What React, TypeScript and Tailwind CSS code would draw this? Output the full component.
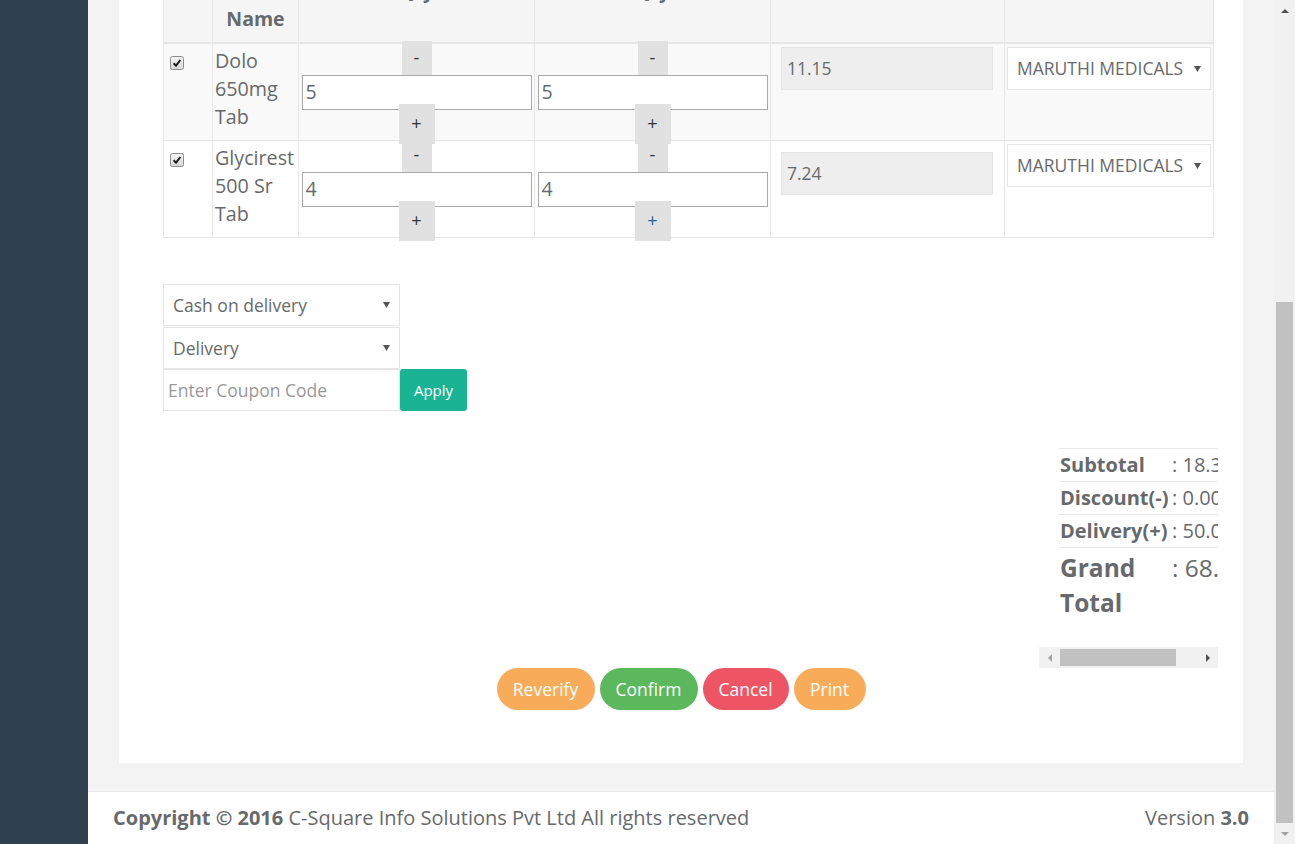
import React from "react";

interface IRow {
  name: string;
  qty: string;
  price: string;
  priceTop: string;
  bg: string;
  plusColor: string;
}

const rows: IRow[] = [
  { name: "Dolo 650mg Tab", qty: "5", price: "11.15", priceTop: "mt-[3px]", bg: "bg-[#f9f9f9]", plusColor: "text-[#333]" },
  { name: "Glycirest 500 Sr Tab", qty: "4", price: "7.24", priceTop: "mt-[11px]", bg: "bg-white", plusColor: "text-[#2a6496]" },
];

const summary = [
  ["Subtotal", ": 18.39"],
  ["Discount(-)", ": 0.00"],
  ["Delivery(+)", ": 50.00"],
];

const Caret = () => (
  <svg width="7" height="6" viewBox="0 0 7 6" className="shrink-0">
    <path d="M0 0h7L3.5 6z" fill="#555" />
  </svg>
);

const CheckBox = () => (
  <svg width="14" height="14" viewBox="0 0 14 14">
    <defs>
      <linearGradient id="cbg" x1="0" y1="0" x2="0" y2="1">
        <stop offset="0" stopColor="#f6f6f6" />
        <stop offset="1" stopColor="#d6d6d6" />
      </linearGradient>
    </defs>
    <rect x="0.5" y="0.5" width="13" height="13" rx="2" fill="url(#cbg)" stroke="#8c8c8c" />
    <path d="M3.6 7.3 L6 9.7 L10.4 4" fill="none" stroke="#1e1e1e" strokeWidth="2" />
  </svg>
);

const Stepper = ({ value, plusColor }: { value: string; plusColor: string }) => (
  <div className="flex h-full flex-col items-center justify-center">
    <div className="flex h-[34px] w-[30px] shrink-0 items-center justify-center bg-[#e1e1e1] text-[18px] text-[#333]">
      -
    </div>
    <div className="flex h-[35px] w-[230px] shrink-0 items-center border border-[#a9a9a9] bg-white px-[3px] text-[19.5px]">
      {value}
    </div>
    <div
      className={`relative -mt-[6px] flex h-[40px] w-[36px] shrink-0 items-center justify-center bg-[#e1e1e1] text-[18px] ${plusColor}`}
    >
      +
    </div>
  </div>
);

const App = () => {
  return (
    <div className="flex h-[844px] w-[1295px] overflow-hidden bg-[#f3f3f4] font-['Open_Sans',sans-serif] text-[#676a6c]">
      <aside className="w-[88px] shrink-0 bg-[#2f4050]" />

      <div className="flex w-[1186px] shrink-0 flex-col">
        <div className="flex min-h-0 flex-1 flex-col justify-end overflow-hidden px-[31px] pb-[28px]">
          <div className="shrink-0 bg-white pt-[20px] pb-[53px]">
            {/* order items */}
            <div className="ml-[44px] w-[1051px] border-l border-[#e7e7e7]">
              <div className="flex h-[70px] border-b-2 border-[#e7e7e7] bg-[#f5f5f6] text-center text-[19.5px] font-bold leading-[28px]">
                <div className="w-[49px] shrink-0 border-r border-[#e7e7e7]" />
                <div className="w-[86px] shrink-0 border-r border-[#e7e7e7] px-[2px] pt-[3px]">
                  Medicine Name
                </div>
                <div className="w-[236px] shrink-0 border-r border-[#e7e7e7] pt-[3px]">Qty</div>
                <div className="w-[236px] shrink-0 border-r border-[#e7e7e7] pt-[3px]">Qty</div>
                <div className="w-[234px] shrink-0 border-r border-[#e7e7e7] pt-[3px]">MRP</div>
                <div className="w-[209px] shrink-0 border-r border-[#e7e7e7] pt-[3px]">Distributor</div>
              </div>

              {rows.map((r) => (
                <div key={r.name} className={`flex h-[97px] border-b border-[#e7e7e7] ${r.bg}`}>
                  <div className="w-[49px] shrink-0 border-r border-[#e7e7e7] pl-[6px] pt-[12px]">
                    <CheckBox />
                  </div>
                  <div className="w-[86px] shrink-0 border-r border-[#e7e7e7] px-[2px] pt-[3px] text-[19.7px] leading-[28px]">
                    {r.name}
                  </div>
                  <div className="w-[236px] shrink-0 border-r border-[#e7e7e7]">
                    <Stepper value={r.qty} plusColor="text-[#333]" />
                  </div>
                  <div className="w-[236px] shrink-0 border-r border-[#e7e7e7]">
                    <Stepper value={r.qty} plusColor={r.plusColor} />
                  </div>
                  <div className="w-[234px] shrink-0 border-r border-[#e7e7e7] pl-[10px]">
                    <div
                      className={`${r.priceTop} flex h-[43px] w-[212px] items-center border border-[#e5e6e7] bg-[#eeeeee] px-[5px] text-[17.5px]`}
                    >
                      {r.price}
                    </div>
                  </div>
                  <div className="w-[209px] shrink-0 border-r border-[#e7e7e7] pl-[2px] pt-[3px]">
                    <div className="flex h-[43px] w-[204px] items-center justify-between border border-[#e5e6e7] bg-white pl-[9px] pr-[9px] text-[17.5px]">
                      MARUTHI MEDICALS
                      <Caret />
                    </div>
                  </div>
                </div>
              ))}
            </div>

            {/* payment / delivery / coupon */}
            <div className="ml-[44px] mt-[46px] w-[304px] text-[17.5px]">
              <div className="flex h-[42px] w-[237px] items-center justify-between border border-[#e5e6e7] bg-white px-[9px]">
                Cash on delivery
                <Caret />
              </div>
              <div className="mt-px flex h-[42px] w-[237px] items-center justify-between border border-[#e5e6e7] bg-white px-[9px]">
                Delivery
                <Caret />
              </div>
              <div className="flex h-[42px]">
                <div className="flex w-[237px] items-center border border-[#e5e6e7] pl-[4px] text-[#999]">
                  Enter Coupon Code
                </div>
                <div className="flex w-[67px] items-center justify-center rounded-[3px] bg-[#1ab394] text-[15px] text-white">
                  Apply
                </div>
              </div>
            </div>

            {/* totals */}
            <div className="mt-[37px] flex justify-end pr-[25px]">
              <div className="w-[179px]">
                <div className="h-[199px] overflow-hidden pl-[20px]">
                  <div className="w-[260px] text-[20px] leading-[28px]">
                    {summary.map(([label, value]) => (
                      <div key={label} className="flex h-[33px] items-center border-t border-[#e7eaec]">
                        <div className="w-[111px] shrink-0 pl-px font-bold">{label}</div>
                        <div className="whitespace-nowrap pl-[2px]">{value}</div>
                      </div>
                    ))}
                    <div className="flex border-t border-[#e7eaec] pt-[2px] text-[24.5px] leading-[35px]">
                      <div className="w-[111px] shrink-0 pl-px font-bold">Grand Total</div>
                      <div className="whitespace-nowrap pl-[2px]">: 68.39</div>
                    </div>
                  </div>
                </div>
                <div className="flex h-[21px] items-center bg-[#f1f1f1]">
                  <div className="flex h-[21px] w-[21px] items-center justify-center">
                    <svg width="4" height="8" viewBox="0 0 4 8">
                      <path d="M4 0v8L0 4z" fill="#a3a3a3" />
                    </svg>
                  </div>
                  <div className="h-[17px] w-[116px] bg-[#c1c1c1]" />
                  <div className="flex-1" />
                  <div className="flex h-[21px] w-[21px] items-center justify-center">
                    <svg width="4" height="8" viewBox="0 0 4 8">
                      <path d="M0 0v8l4-4z" fill="#505050" />
                    </svg>
                  </div>
                </div>
              </div>
            </div>

            {/* actions */}
            <div className="flex justify-center gap-[5px] text-[17.5px] text-white">
              <div className="flex h-[42px] w-[98px] items-center justify-center rounded-full bg-[#f8ac59]">Reverify</div>
              <div className="flex h-[42px] w-[98px] items-center justify-center rounded-full bg-[#5cb85c]">Confirm</div>
              <div className="flex h-[42px] w-[86px] items-center justify-center rounded-full bg-[#ed5565]">Cancel</div>
              <div className="flex h-[42px] w-[72px] items-center justify-center rounded-full bg-[#f8ac59]">Print</div>
            </div>
          </div>
        </div>

        <footer className="flex h-[53px] shrink-0 items-center justify-between border-t border-[#e7eaec] bg-white px-[25px] pb-px text-[20px]">
          <div>
            <span className="font-bold">Copyright © 2016</span> C-Square Info Solutions Pvt Ltd All rights reserved
          </div>
          <div>
            Version <span className="font-bold">3.0</span>
          </div>
        </footer>
      </div>

      {/* page scrollbar */}
      <div className="flex w-[21px] shrink-0 flex-col bg-[#f1f1f1]">
        <div className="flex h-[21px] items-center justify-center">
          <svg width="8" height="4" viewBox="0 0 8 4">
            <path d="M0 4h8L4 0z" fill="#505050" />
          </svg>
        </div>
        <div className="flex-1" />
        <div className="mx-[2px] h-[521px] bg-[#c1c1c1]" />
        <div className="flex h-[21px] items-center justify-center">
          <svg width="8" height="4" viewBox="0 0 8 4">
            <path d="M0 0h8L4 4z" fill="#a3a3a3" />
          </svg>
        </div>
      </div>
    </div>
  );
};

export default App;
